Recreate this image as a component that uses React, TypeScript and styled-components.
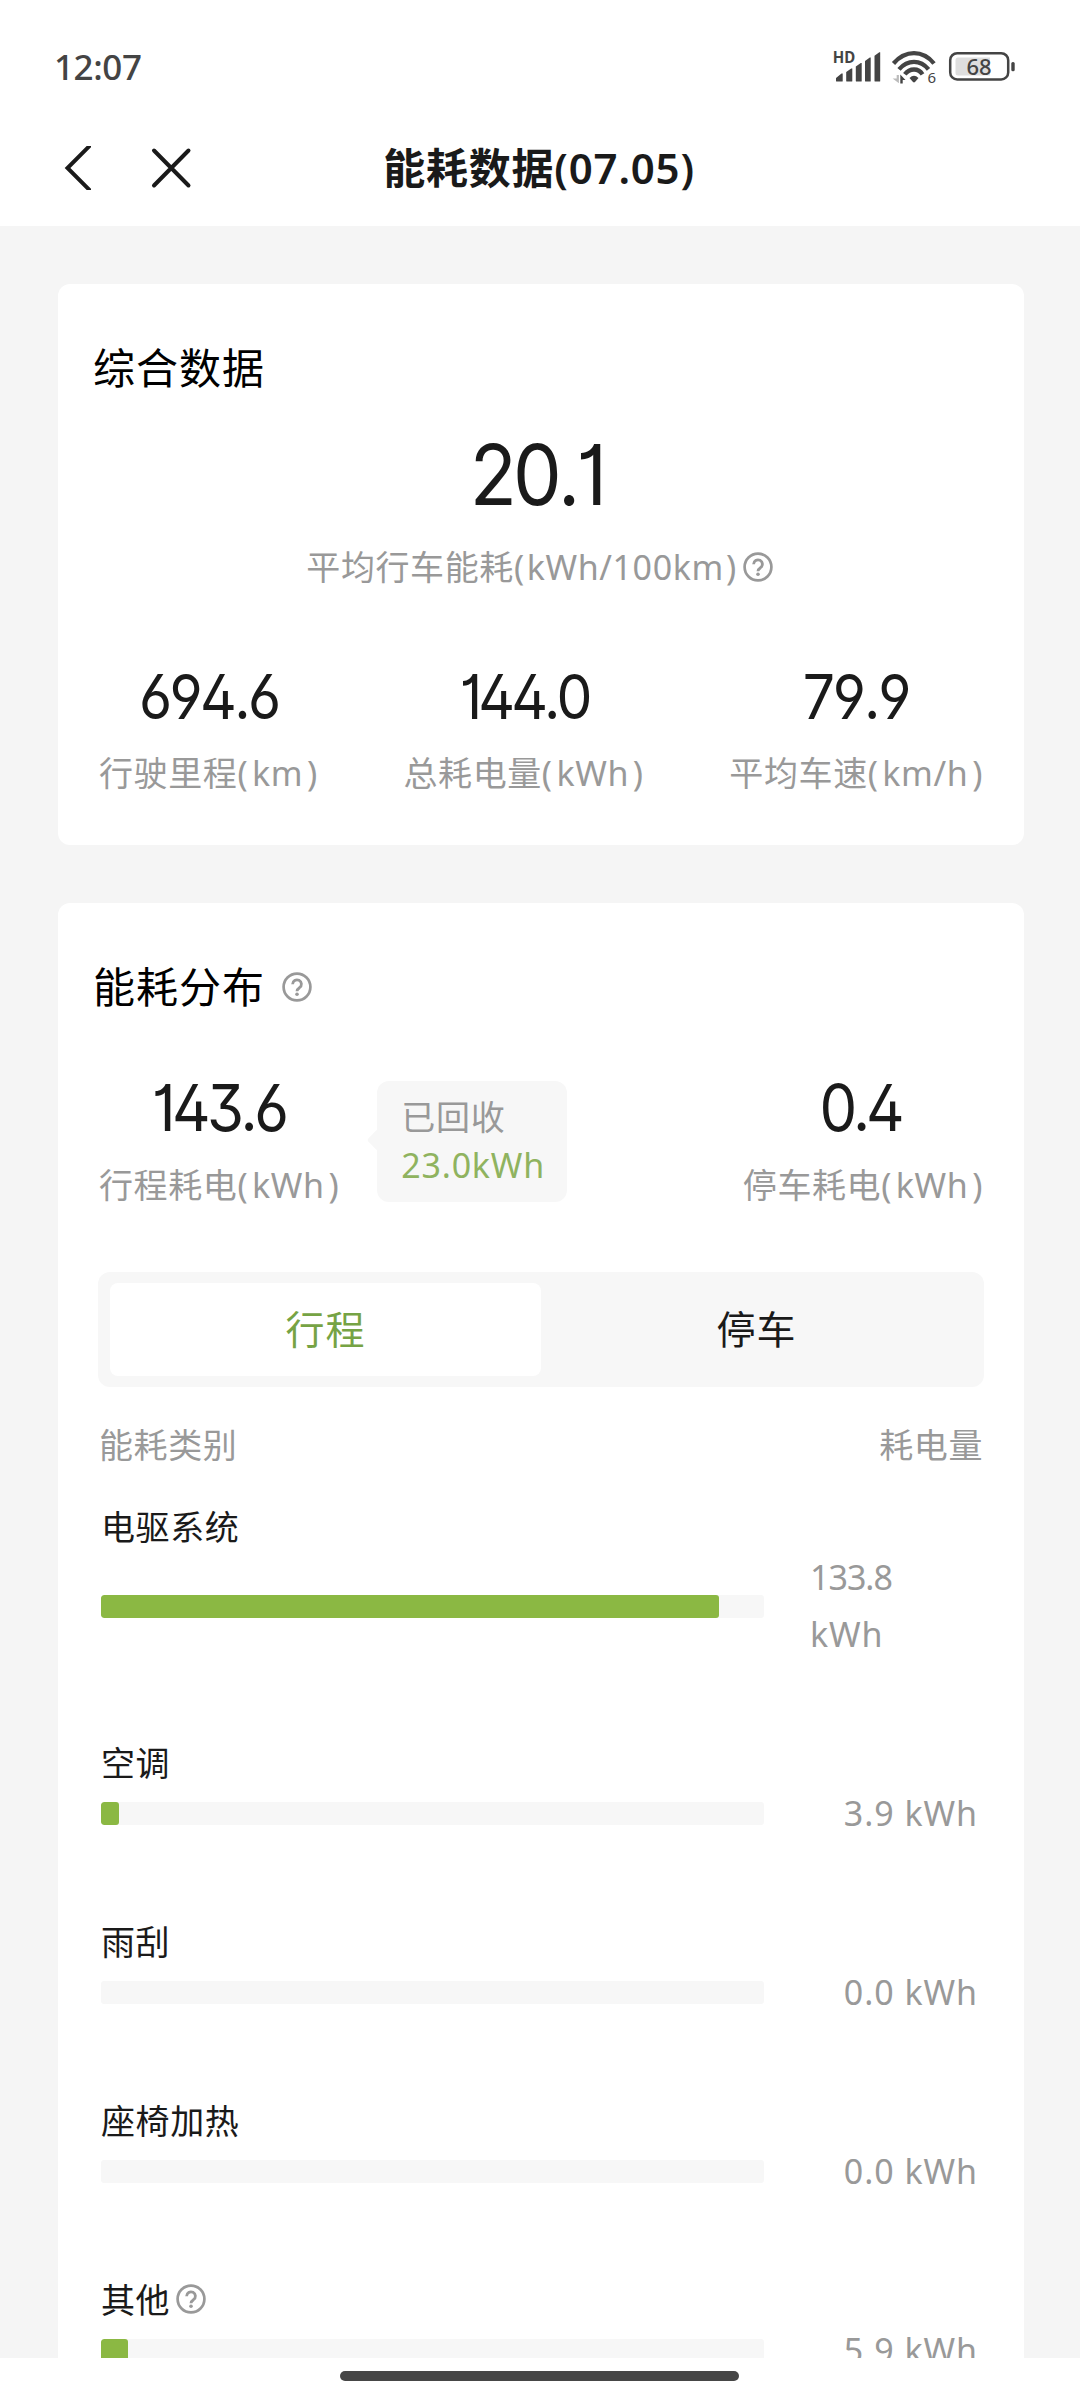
import React from "react";
import styled, { createGlobalStyle, css } from "styled-components";

const GlobalStyle = createGlobalStyle`
  * { box-sizing: border-box; }
  body {
    margin: 0;
    background: #fff;
    font-family: "Noto Sans", "Noto Sans CJK SC", sans-serif;
  }
`;

const Screen = styled.div`
  display: flex;
  flex-direction: column;
  width: 1080px;
  height: 2400px;
  overflow: hidden;
  background: #fff;
`;

const StatusBar = styled.header`
  display: flex;
  justify-content: space-between;
  align-items: center;
  flex: none;
  height: 110px;
  padding: 24px 64px 0 54px;
  color: #444;
`;

const Clock = styled.time`
  font-size: 35px;
  font-weight: 500;
  line-height: 40px;
  letter-spacing: -0.4px;
`;

const StatusIcons = styled.svg`
  display: block;
  flex: none;
`;

const NavBar = styled.nav`
  display: grid;
  grid-template-columns: 1fr auto 1fr;
  align-items: center;
  flex: none;
  height: 116px;
  padding: 0 65px 0 63px;
`;

const NavActions = styled.div`
  display: flex;
  align-items: center;
  gap: 59px;

  svg {
    display: block;
  }
`;

const PageTitle = styled.h1`
  margin: 0;
  color: #1a1a1a;
  font-size: 42px;
  font-weight: 600;
  line-height: 56px;
  letter-spacing: 0.8px;
`;

const Content = styled.main`
  display: flex;
  flex-direction: column;
  gap: 58px;
  flex: none;
  height: 2132px;
  padding: 58px 56px 0 58px;
  background: #f5f5f5;
  overflow: hidden;
`;

const Card = styled.section<{ $height?: number }>`
  flex: none;
  height: ${(p) => (p.$height ? `${p.$height}px` : "auto")};
  padding: 56px 40px 0;
  border-radius: 12px;
  background: #fff;
`;

const CardTitle = styled.h2`
  display: flex;
  align-items: center;
  gap: 17px;
  height: 56px;
  margin: 0 0 0 -5px;
  color: #000;
  font-size: 42px;
  font-weight: 400;
  line-height: 56px;
  letter-spacing: 1px;
`;

const Figure = styled.div<{ $size: number; $tracking: number; $inset?: number }>`
  margin-right: ${(p) => p.$inset ?? 0}px;
  color: #1a1a1a;
  font-family: Inter, "Noto Sans", sans-serif;
  font-feature-settings: "ss01", "cv01", "cv03", "cv04", "cv09";
  font-kerning: none;
  font-size: ${(p) => p.$size}px;
  line-height: 1;
  letter-spacing: ${(p) => p.$tracking}em;
  white-space: nowrap;
  transform: scaleX(0.92);
`;

const Label = styled.div`
  display: flex;
  align-items: center;
  color: #999;
  font-size: 34px;
  line-height: 48px;
  letter-spacing: 0.6px;
  white-space: nowrap;

  svg {
    margin-left: 6px;
  }
`;

const Unit = styled.span`
  padding: 0 3.8px;
`;

const Headline = styled.div`
  display: flex;
  flex-direction: column;
  align-items: center;
  gap: 26px;
  padding-top: 37px;

  ${Label} {
    padding-right: 3px;
  }

  ${Unit} {
    padding: 0 2px;
  }
`;

const StatRow = styled.div<{ $top: number }>`
  display: flex;
  justify-content: space-between;
  padding: ${(p) => p.$top}px 1px 0;
`;

const Stat = styled.div`
  display: flex;
  flex-direction: column;
  align-items: center;
  gap: 21px;
`;

const TripGroup = styled.div`
  display: flex;
  align-items: flex-start;
  gap: 38px;
`;

const Bubble = styled.aside`
  position: relative;
  display: flex;
  flex-direction: column;
  width: 190px;
  height: 121px;
  margin-top: 6px;
  padding: 12px 0 0 24px;
  border-radius: 12px;
  background: #f7f7f7;

  &::before {
    content: "";
    position: absolute;
    left: -7px;
    top: 51px;
    width: 16px;
    height: 16px;
    border-radius: 3px;
    background: #f7f7f7;
    transform: rotate(45deg);
  }
`;

const bubbleText = css`
  font-size: 34px;
  line-height: 48px;
  letter-spacing: 0.8px;
  white-space: nowrap;
`;

const BubbleLabel = styled.span`
  ${bubbleText}
  color: #999;
`;

const BubbleValue = styled.span`
  ${bubbleText}
  color: #8fb35f;
`;

const Segmented = styled.div`
  display: flex;
  height: 115px;
  margin-top: 63px;
  padding: 11px 12px;
  border-radius: 12px;
  background: #f7f7f7;
`;

const Segment = styled.button<{ $active?: boolean }>`
  flex: 1;
  padding: 0 0 2px;
  border: 0;
  border-radius: 8px;
  background: ${(p) => (p.$active ? "#fff" : "transparent")};
  color: ${(p) => (p.$active ? "#76a344" : "#1a1a1a")};
  font-family: inherit;
  font-size: 39px;
  line-height: 52px;
  letter-spacing: 1px;
`;

const TableHead = styled.div`
  display: flex;
  justify-content: space-between;
  padding: 34px 1px 0;
`;

const UsageList = styled.ul`
  display: flex;
  flex-direction: column;
  gap: 76px;
  margin: 34px 0 0;
  padding: 0 6px 0 3px;
  list-style: none;
`;

const UsageName = styled.div`
  display: flex;
  align-items: center;
  gap: 6px;
  height: 46px;
  padding-top: 2px;
  color: #1a1a1a;
  font-size: 34px;
  line-height: 44px;
  letter-spacing: 0.6px;

  svg {
    margin-bottom: 3px;
  }
`;

const UsageBody = styled.div`
  display: flex;
  align-items: center;
  justify-content: space-between;
`;

const Track = styled.div`
  width: 663px;
  height: 23px;
  border-radius: 3px;
  background: #f7f7f7;
  overflow: hidden;
`;

const Fill = styled.div`
  height: 100%;
  border-radius: 3px;
  background: #8bb843;
`;

const UsageValue = styled.div`
  display: flex;
  flex-wrap: wrap;
  justify-content: flex-start;
  column-gap: 10px;
  width: 168px;
  color: #999;
  font-size: 34px;
  line-height: 57px;
  letter-spacing: 0.9px;
`;

const UsageAmount = styled.span<{ $wide: boolean }>`
  margin-left: ${(p) => (p.$wide ? "0" : "auto")};
  margin-right: ${(p) => (p.$wide ? "20px" : "0")};
  letter-spacing: ${(p) => (p.$wide ? "-1px" : "0.9px")};
`;

const HomeArea = styled.footer`
  display: flex;
  justify-content: center;
  flex: none;
  height: 42px;
  padding: 13px 1px 0 0;
`;

const HomeBar = styled.div`
  width: 399px;
  height: 10px;
  border-radius: 5px;
  background: #464646;
`;

const HelpIcon = () => (
  <svg width="30" height="30" viewBox="0 0 30 30" fill="none" stroke="#999">
    <circle cx="15" cy="15" r="13.4" strokeWidth="2.7" />
    <path d="M10.6 12.2a4.4 4.3 0 1 1 6.9 3.5c-1.6 1.1-2.5 1.7-2.5 3.6" strokeWidth="2.8" />
    <circle cx="15" cy="22.2" r="1.8" fill="#999" stroke="none" />
  </svg>
);

const StatusGlyphs = () => (
  <StatusIcons width="184" height="40" viewBox="832 47 184 40" fill="#444">
    <text x="832.8" y="63" fontSize="15.5" fontWeight="700" textLength="22.500" lengthAdjust="spacingAndGlyphs">HD</text>
    <path d="M836 81v-3l5.500-4.500h1.200V81q0 .5-.5.500h-5.200q-1 0-1-.5zM846.200 72l5-3.500h1.100V81q0 .5-.5.500h-4.600q-1 0-1-.5zM855.800 66.500l5-3.500h.9V81q0 .5-.5.500h-4.400q-1 0-1-.5zM865 61l4.800-3.500h.9V81q0 .5-.5.500h-4.200q-1 0-1-.5zM874.500 55.800l4.800-3.500h.9V81q0 .5-.5.500h-4.200q-1 0-1-.5z" />
    <g fill="none" stroke="#444" strokeWidth="4.300">
      <path d="M893.500 63.500Q902.500 53.200 914 53.200T934 63.500" />
      <path d="M899 69.300Q905.500 61.800 914 61.800T928.500 69.300" />
      <path d="M904.800 74.300Q908.500 69.500 914 69.500T922.500 74.300" />
    </g>
    <path d="M909.500 78q4.500-4.300 9 0l-3.500 4q-1 .9-2 0z" />
    <path d="M896.700 75h2.200v8.200l-6.300-4.700h4.100z" fill="#bbb" />
    <path d="M900.300 83.500v-9l5.200 5.500h-2.800v3.500z" />
    <text x="927.400" y="83.300" fontSize="15">6</text>
    <rect x="950.200" y="53.200" width="58" height="26.300" rx="7" fill="none" stroke="#444" strokeWidth="2.500" />
    <path d="M958 57.500h32v18h-32q-2.500 0-2.500-2.500v-13q0-2.500 2.500-2.500z" fill="#dedede" />
    <rect x="1011.300" y="62" width="3.400" height="9.300" rx="1.500" />
    <text x="979" y="74.700" fontSize="22" fontWeight="500" textAnchor="middle">68</text>
  </StatusIcons>
);

const totals = [
  { value: "694.6", tracking: -0.047, name: "行驶里程", unit: "km" },
  { value: "144.0", tracking: -0.07, name: "总耗电量", unit: "kWh" },
  { value: "79.9", tracking: -0.036, name: "平均车速", unit: "km/h" },
];

const usage = [
  { name: "电驱系统", amount: "133.8", share: 93.2 },
  { name: "空调", amount: "3.9", share: 2.7 },
  { name: "雨刮", amount: "0.0", share: 0 },
  { name: "座椅加热", amount: "0.0", share: 0 },
  { name: "其他", amount: "5.9", share: 4.1, help: true },
];

const Metric = ({ name, unit, help }: { name: string; unit: string; help?: boolean }) => (
  <Label>
    {name}(<Unit>{unit}</Unit>)
    {help && <HelpIcon />}
  </Label>
);

export default function App() {
  return (
    <>
      <GlobalStyle />
      <Screen lang="zh-CN">
        <StatusBar>
          <Clock>12:07</Clock>
          <StatusGlyphs />
        </StatusBar>
        <NavBar>
          <NavActions>
            <svg width="28" height="44" viewBox="0 0 28 44" fill="none" stroke="#1a1a1a" strokeWidth="4">
              <path d="M28-1.500L4.500 22l23.500 23.500" />
            </svg>
            <svg width="42" height="42" viewBox="0 0 42 42" fill="none" stroke="#1a1a1a" strokeWidth="4" strokeLinecap="round">
              <path d="M4 3.500l34.500 35M38.500 3.500l-34.500 35" />
            </svg>
          </NavActions>
          <PageTitle>能耗数据(07.05)</PageTitle>
        </NavBar>
        <Content>
          <Card $height={561}>
            <CardTitle>综合数据</CardTitle>
            <Headline>
              <Figure $size={84} $tracking={-0.05} $inset={8}>20.1</Figure>
              <Metric name="平均行车能耗" unit="kWh/100km" help />
            </Headline>
            <StatRow $top={75}>
              {totals.map((t) => (
                <Stat key={t.name}>
                  <Figure $size={62} $tracking={t.tracking}>{t.value}</Figure>
                  <Metric name={t.name} unit={t.unit} />
                </Stat>
              ))}
            </StatRow>
          </Card>
          <Card>
            <CardTitle>
              能耗分布
              <HelpIcon />
            </CardTitle>
            <StatRow $top={60}>
              <TripGroup>
                <Stat>
                  <Figure $size={65} $tracking={-0.06}>143.6</Figure>
                  <Metric name="行程耗电" unit="kWh" />
                </Stat>
                <Bubble>
                  <BubbleLabel>已回收</BubbleLabel>
                  <BubbleValue>23.0kWh</BubbleValue>
                </Bubble>
              </TripGroup>
              <Stat>
                <Figure $size={65} $tracking={-0.07} $inset={6}>0.4</Figure>
                <Metric name="停车耗电" unit="kWh" />
              </Stat>
            </StatRow>
            <Segmented>
              <Segment $active>行程</Segment>
              <Segment>停车</Segment>
            </Segmented>
            <TableHead>
              <Label>能耗类别</Label>
              <Label>耗电量</Label>
            </TableHead>
            <UsageList>
              {usage.map((u) => (
                <li key={u.name}>
                  <UsageName>
                    {u.name}
                    {u.help && <HelpIcon />}
                  </UsageName>
                  <UsageBody>
                    <Track>
                      <Fill style={{ width: `${u.share}%` }} />
                    </Track>
                    <UsageValue>
                      <UsageAmount $wide={u.amount.length > 4}>{u.amount}</UsageAmount>
                      <span>kWh</span>
                    </UsageValue>
                  </UsageBody>
                </li>
              ))}
            </UsageList>
          </Card>
        </Content>
        <HomeArea>
          <HomeBar />
        </HomeArea>
      </Screen>
    </>
  );
}
